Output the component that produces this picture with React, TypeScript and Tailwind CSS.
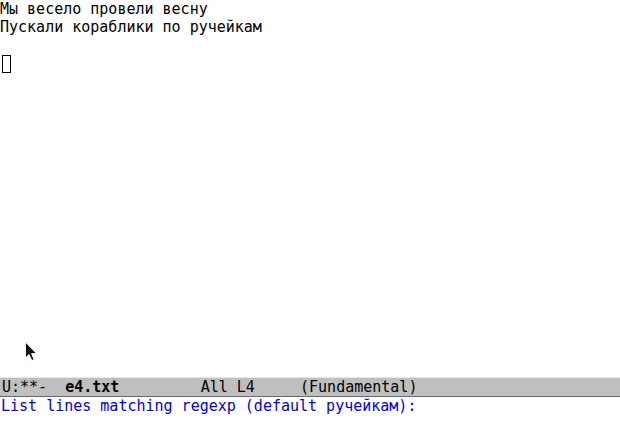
const lines = ['Мы весело провели весну', 'Пускали кораблики по ручейкам', ''];

const Pointer = () => (
  <svg
    className="absolute left-[24px] top-[341px]"
    width="15"
    height="22"
    viewBox="0 0 13 20"
  >
    <path
      d="M1 1 L1 15.5 L4.3 12.3 L6.7 17.8 L8.9 16.9 L6.6 11.5 L11.3 11.5 Z"
      fill="#111"
      stroke="#fff"
      strokeWidth="0.9"
      strokeLinejoin="round"
    />
  </svg>
);

export default function App() {
  return (
    <div
      className="relative flex h-[426px] w-[620px] flex-col overflow-hidden bg-white text-[15px] leading-[18px] text-black"
      style={{ fontFamily: '"DejaVu Sans Mono", "Liberation Mono", monospace' }}
    >
      {/* Buffer */}
      <div className="h-[377px] whitespace-pre">
        {lines.map((line, i) => (
          <div key={i} className="h-[18px]">
            {line}
          </div>
        ))}
        <div className="h-[18px] pl-[2px] pt-[1px]">
          <div className="h-[18px] w-[9px] border border-black" />
        </div>
      </div>

      {/* Mode line */}
      <div className="h-[20px] whitespace-pre border-t border-b border-t-[#e8e8e8] border-b-[#6a6a6a] bg-[#bfbfbf] pl-[2px] text-black">
        {'U:**-  '}
        <span className="font-bold">e4.txt</span>
        {'         All L4     (Fundamental)'}
      </div>

      {/* Minibuffer */}
      <div className="h-[18px] whitespace-pre pl-[1px] text-[#0000e0]">
        List lines matching regexp (default ручейкам):
      </div>

      <Pointer />
    </div>
  );
}
